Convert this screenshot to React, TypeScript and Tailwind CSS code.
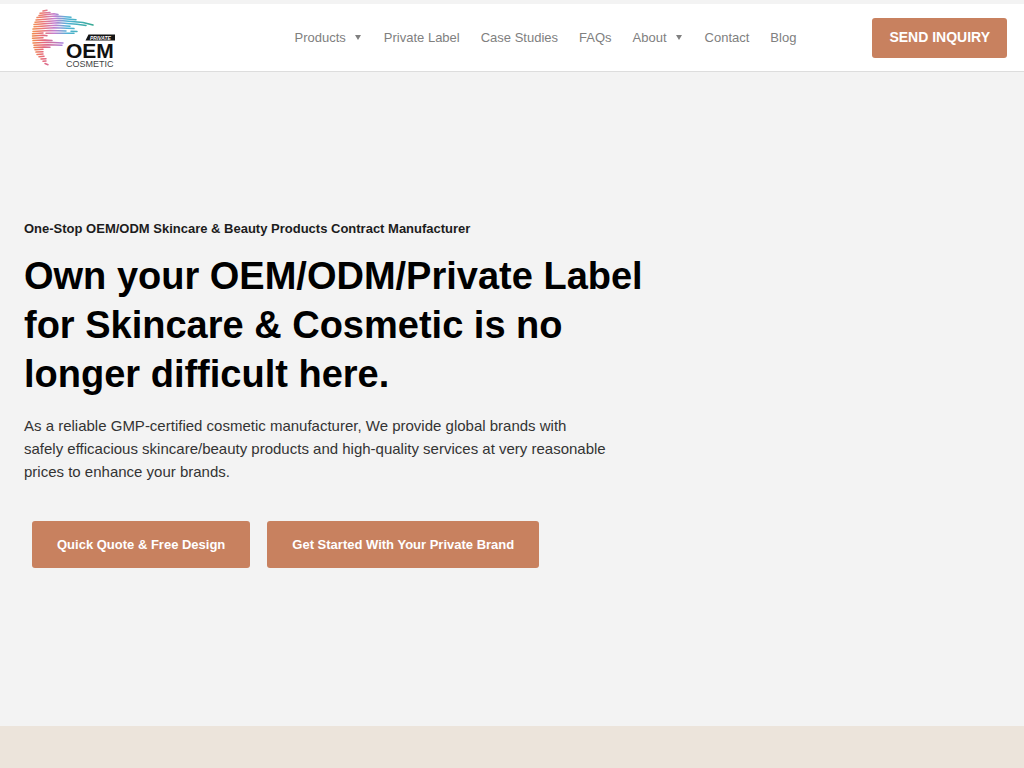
type NavItem = {
  label: string;
  hasMenu?: boolean;
};

const navItems: NavItem[] = [
  { label: 'Products', hasMenu: true },
  { label: 'Private Label' },
  { label: 'Case Studies' },
  { label: 'FAQs' },
  { label: 'About', hasMenu: true },
  { label: 'Contact' },
  { label: 'Blog' },
];

function Logo() {
  return (
    <svg viewBox="0 0 86 60" className="h-[60px] w-[86px]" role="img" aria-label="Private OEM Cosmetic">
      <defs>
        <linearGradient id="streak" gradientUnits="userSpaceOnUse" x1="0" y1="0" x2="64" y2="0">
          <stop offset="0" stopColor="#f39a4a" />
          <stop offset="0.2" stopColor="#ec7775" />
          <stop offset="0.38" stopColor="#c47fd0" />
          <stop offset="0.58" stopColor="#52b4d8" />
          <stop offset="1" stopColor="#35a890" />
        </linearGradient>
        <linearGradient id="lower" gradientUnits="userSpaceOnUse" x1="0" y1="0" x2="34" y2="0">
          <stop offset="0" stopColor="#f39442" />
          <stop offset="0.4" stopColor="#e5687c" />
          <stop offset="1" stopColor="#a884e2" />
        </linearGradient>
      </defs>
      <g fill="none" stroke="url(#streak)" strokeWidth="1.5" strokeLinecap="round">
        <path d="M13 3L17 2.200" />
        <path d="M10 5.200L20 4.600" />
        <path d="M9 7.400L24 5.800L28 6.400" />
        <path d="M7 9.600L26 8L41 9.200" />
        <path d="M6 11.900L28 10.200L46 11.700" />
        <path d="M5 14.200L30 12.400L53 14.600L63 17" />
        <path d="M4 16.500L28 14.800L47 16.300L56 17.400" />
        <path d="M4 18.800L26 17.300L40 18.300" />
        <path d="M3 21.100L24 19.800L44 20.600" />
        <path d="M3 23.400L20 22.400L36 22.900" />
        <path d="M16 25.200L44 25.200" />
        <path d="M41 23.200L47 23.400" />
      </g>
      <g fill="none" stroke="url(#lower)" strokeWidth="1.5" strokeLinecap="round">
        <path d="M2.500 25.700L13 25.100" />
        <path d="M2.500 28L13 27.300L17 27.700" />
        <path d="M2.500 30.300L13 29.800" />
        <path d="M3 32.600L15 32.100L22 32.500" />
        <path d="M3 34.900L18 34.300L33 34.900" />
        <path d="M4 37.200L18 36.700L32 37.200" />
        <path d="M4 39.500L14 39L20 39.300" />
        <path d="M5 41.800L13 41.300" />
        <path d="M6 44.100L13 43.700" />
        <path d="M7 46.400L13 46" />
        <path d="M9 48.700L14 48.300" />
        <path d="M11 51L16 50.700" />
        <path d="M13 53.300L16 53.100" />
        <path d="M15 55.500L18 56.800" />
      </g>
      <path d="M58.500 26.500H85V32.500H55.500Z" fill="#151515" />
      <text x="60" y="31.500" fontSize="5" className="fill-white font-bold italic">
        PRIVATE
      </text>
      <text x="36" y="50" fontSize="21" className="fill-[#111111] font-bold">
        OEM
      </text>
      <text x="36" y="59" fontSize="9" className="fill-[#444444]">
        COSMETIC
      </text>
    </svg>
  );
}

function Header() {
  return (
    <header className="border-t-4 border-b border-t-[#f3f3f3] border-b-[#dddddd] bg-white">
      <div className="flex h-[67px] items-center pr-[17px] pl-[30px]">
        <a href="#">
          <Logo />
        </a>
        <nav className="ml-auto flex items-center gap-[21px] text-[13px] text-[#808080]">
          {navItems.map((item) => (
            <a key={item.label} href="#" className="flex items-center gap-[9px] whitespace-nowrap">
              {item.label}
              {item.hasMenu && (
                <svg viewBox="0 0 6 5" className="mr-[2px] h-[5px] w-[6px]" aria-hidden="true">
                  <path d="M0 0H6L3 5Z" fill="currentColor" />
                </svg>
              )}
            </a>
          ))}
        </nav>
        <button className="ml-[76px] h-10 rounded-[3px] bg-[#c8815f] px-[17px] text-[14px] font-bold whitespace-nowrap text-white">
          SEND INQUIRY
        </button>
      </div>
    </header>
  );
}

export default function App() {
  return (
    <div className="flex min-h-screen flex-col bg-[#f3f3f3] font-['Liberation_Sans',Arial,sans-serif]">
      <Header />
      <main className="flex-1 px-6 pt-[147px] pb-[157px]">
        <p className="text-[13px] leading-5 font-bold text-[#1c1c1c]">
          One-Stop OEM/ODM Skincare &amp; Beauty Products Contract Manufacturer
        </p>
        <h1 className="mt-[13px] max-w-[640px] text-[38px] leading-[49px] font-bold text-black">
          Own your OEM/ODM/Private Label for Skincare &amp; Cosmetic is no longer difficult here.
        </h1>
        <p className="mt-[15px] max-w-[600px] text-[15px] leading-[23px] text-[#333333]">
          As a reliable GMP-certified cosmetic manufacturer, We provide global brands with
          <br />
          safely efficacious skincare/beauty products and high-quality services at very reasonable prices to enhance
          your brands.
        </p>
        <div className="mt-[38px] ml-2 flex gap-[17px]">
          <button className="h-[47px] rounded-[3px] bg-[#c8815f] px-[25px] text-[13px] font-bold text-white">
            Quick Quote &amp; Free Design
          </button>
          <button className="h-[47px] rounded-[3px] bg-[#c8815f] px-[25px] text-[13px] font-bold text-white">
            Get Started With Your Private Brand
          </button>
        </div>
      </main>
      <div className="h-[42px] bg-[#ece4db]" />
    </div>
  );
}
